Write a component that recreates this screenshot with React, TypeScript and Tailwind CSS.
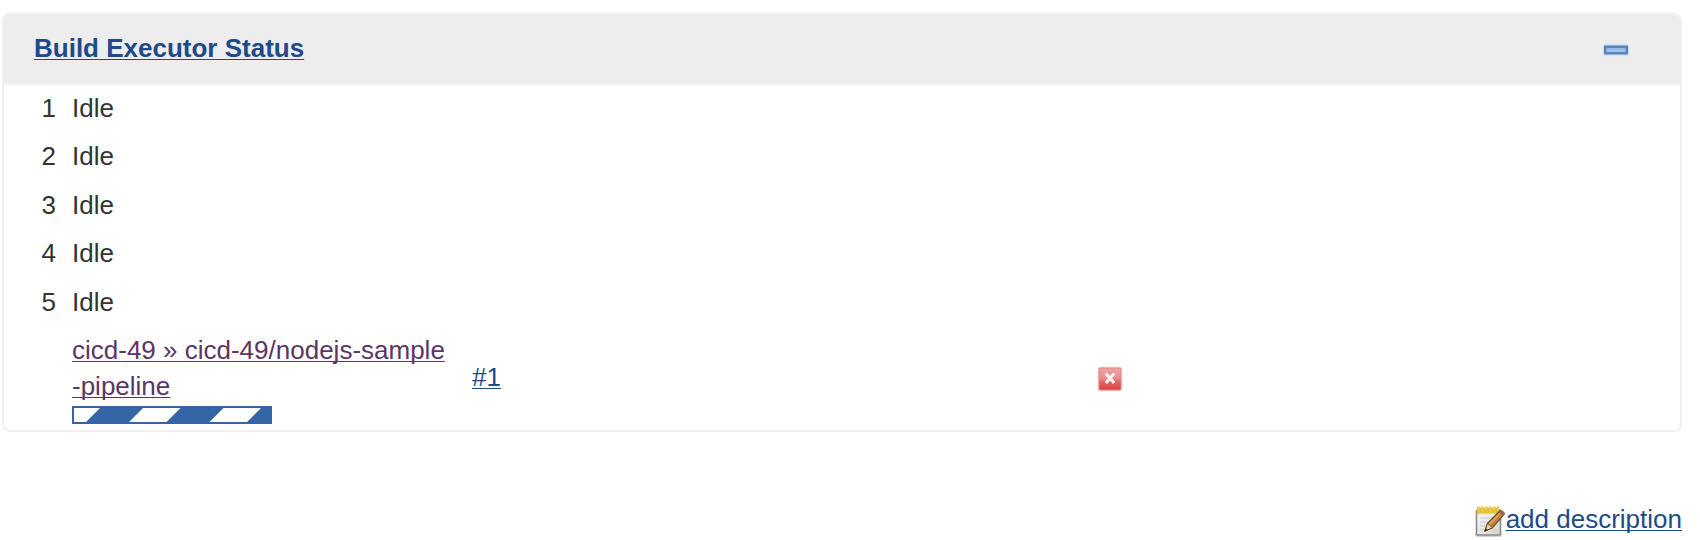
const executors = [1, 2, 3, 4, 5];

const link =
  "underline decoration-1 underline-offset-[2px] [text-decoration-skip-ink:none]";

function CollapseIcon() {
  return (
    <svg className="mr-[50px] mt-[27px] block h-4 w-7" viewBox="0 0 28 16">
      <defs>
        <linearGradient id="collapse" x1="0" y1="0" x2="0" y2="1">
          <stop offset="0" stopColor="#8fb5e0" />
          <stop offset="1" stopColor="#a9c9ea" />
        </linearGradient>
      </defs>
      <rect x="1" y="2.5" width="26" height="11" rx="2" fill="#cbd8e8" />
      <rect x="2" y="3.5" width="24" height="9" rx="1" fill="#5585c0" />
      <rect x="4.5" y="6" width="19" height="4" fill="url(#collapse)" />
    </svg>
  );
}

function StopIcon() {
  return (
    <svg className="block h-[26px] w-[26px]" viewBox="0 0 26 26">
      <defs>
        <linearGradient id="stop" x1="0" y1="0" x2="0" y2="1">
          <stop offset="0" stopColor="#eda5a5" />
          <stop offset="0.5" stopColor="#e88888" />
          <stop offset="0.65" stopColor="#e06060" />
          <stop offset="1" stopColor="#da4848" />
        </linearGradient>
      </defs>
      <rect x="0.5" y="0.5" width="25" height="25" rx="3" fill="#f9e3e3" />
      <rect x="1.5" y="1.5" width="23" height="23" rx="2" fill="#e38080" />
      <rect x="2.5" y="2.5" width="21" height="21" rx="1" fill="url(#stop)" />
      <path d="M8.8 7.5l8.4 9.5M17.2 7.5l-8.4 9.5" stroke="#fbeeee" strokeWidth="3.2" />
    </svg>
  );
}

function NotepadIcon() {
  return (
    <svg className="block h-8 w-8" viewBox="0 0 32 32">
      <defs>
        <linearGradient id="paper" x1="0" y1="0" x2="1" y2="1">
          <stop offset="0" stopColor="#fafafa" />
          <stop offset="1" stopColor="#d2d2d0" />
        </linearGradient>
      </defs>
      <rect x="1" y="26.5" width="27" height="4.5" rx="2" fill="#b9b9b9" opacity="0.6" />
      <rect x="2.5" y="4" width="24" height="25" rx="1" fill="url(#paper)" stroke="#8c8c89" strokeWidth="1.6" />
      <path d="M6 12h15M6 16h12M6 20h9M6 24h7M19 24h4" stroke="#cfcfcc" strokeWidth="1.2" />
      <rect x="3" y="2" width="22" height="5" fill="#dfb72e" />
      <path d="M4.5 1.5v5.5M8.5 1.5v5.5M12.5 1.5v5.5M16.5 1.5v5.5M20.5 1.5v5.5M24 1.5v5.5" stroke="#e9c840" strokeWidth="2.7" strokeLinecap="round" />
      <path d="M11 25l2.5-7.8L26 4.8c1-1 5 2.2 4.2 3.4L18.5 21.8z" fill="#bd813a" stroke="#704a20" strokeWidth="1.2" />
      <path d="M15.3 18.5L26.6 7" stroke="#d9a35c" strokeWidth="2" />
      <path d="M11 25l2.5-7.8 5 4.6z" fill="#ead1a5" stroke="#704a20" strokeWidth="1" />
      <path d="M10.5 25.5l1.3-3.3 2 2z" fill="#33291f" />
      <path d="M24.9 6.7l3.8 3.3L30.5 8c.4-1-3.2-4-4-2.9z" fill="#a36a53" />
    </svg>
  );
}

function ProgressBar() {
  return (
    <svg className="block h-[18px] w-[200px]" viewBox="0 0 200 18">
      <rect width="200" height="18" fill="#3465a4" />
      <path
        d="M2 2H28L14 16H2zM71 2h37.5l-14 14H57zM151.5 2H189l-14 14h-37.5z"
        fill="#fff"
      />
    </svg>
  );
}

export default function App() {
  return (
    <main className="flex h-[540px] w-[1700px] flex-col overflow-hidden bg-white pl-[2px] pt-[13px] font-['Liberation_Sans',Arial,sans-serif] text-[26px] leading-[36px] text-[#333]">
      <section className="h-[419px] w-[1680px] overflow-hidden rounded-[8px] border-2 border-[#f0f0f0]">
        <header className="flex h-[70px] items-start justify-between border-b-2 border-[#f0f0f0] bg-[#ededed]">
          <a className={`ml-[30px] mt-[15px] font-bold text-[#204a87] ${link}`}>Build Executor Status</a>
          <CollapseIcon />
        </header>
        <div className="pt-[5px]">
          {executors.map((n) => (
            <div key={n} className="flex h-[48.4px] items-start">
              <span className="w-[52px] text-right">{n}</span>
              <span className="ml-4">Idle</span>
            </div>
          ))}
        </div>
        <div className="flex items-start">
          <div className="ml-[68px] w-[400px]">
            <a className={`block leading-[36px] text-[#5c3566] ${link}`}>
              cicd-49 » cicd-49/nodejs-sample
              <br />
              -pipeline
            </a>
            <div className="mt-[2px]">
              <ProgressBar />
            </div>
          </div>
          <a className={`mt-[27px] w-[625px] text-[#204a87] ${link}`}>#1</a>
          <div className="mt-[34px]">
            <StopIcon />
          </div>
        </div>
      </section>
      <div className="mt-[69px] flex w-[1680px] items-start justify-end">
        <div className="mt-[5px]">
          <NotepadIcon />
        </div>
        <a className={`text-[#204a87] ${link}`}>add description</a>
      </div>
    </main>
  );
}
